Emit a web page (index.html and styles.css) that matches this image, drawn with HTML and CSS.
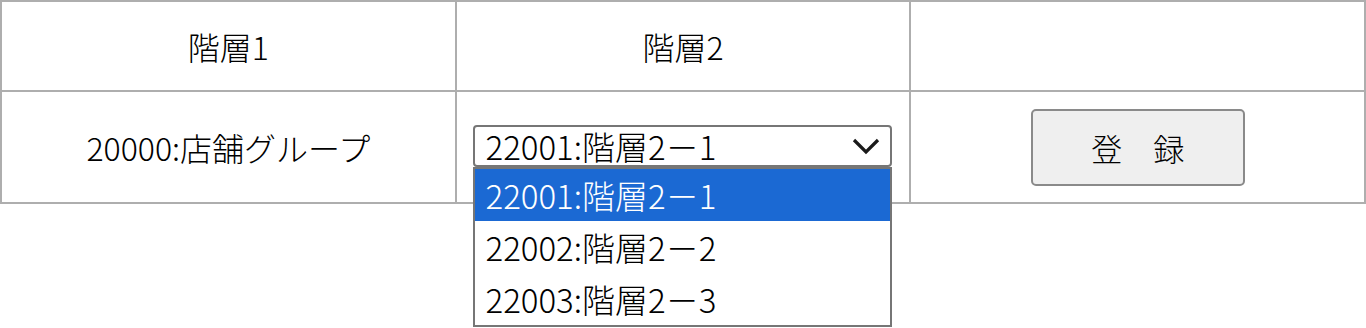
FILE: index.html
```html
<!DOCTYPE html>
<html lang="ja">
<head>
<meta charset="utf-8">
<link rel="stylesheet" href="styles.css">
</head>
<body>
<table class="grid">
  <tr class="head-row">
    <td>階層1</td>
    <td>階層2</td>
    <td></td>
  </tr>
  <tr class="body-row">
    <td>20000:店舗グループ</td>
    <td>
      <div class="select-wrap">
        <div class="select">
          <span class="select-value">22001:階層2－1</span>
          <svg class="chevron" width="28" height="18" viewBox="0 0 28 18"><polyline points="2,3 14,15 26,3" fill="none" stroke="#1a1a1a" stroke-width="3.2"/></svg>
        </div>
        <ul class="options">
          <li class="option selected">22001:階層2－1</li>
          <li class="option">22002:階層2－2</li>
          <li class="option">22003:階層2－3</li>
        </ul>
      </div>
    </td>
    <td><button class="btn">登　録</button></td>
  </tr>
</table>
</body>
</html>
```
FILE: styles.css
```css
html {
  margin: 0;
  padding: 0;
  min-height: 328px;
  background: #ffffff;
}
body {
  margin: 0;
  padding: 0;
  min-height: 328px;
  font-family: "Noto Sans CJK JP", "Noto Sans", sans-serif;
  color: #000;
}
.grid {
  width: 1366px;
  border-collapse: collapse;
  table-layout: fixed;
}
.grid td {
  border: 2px solid #aeaeae;
  text-align: center;
  vertical-align: middle;
  font-size: 32px;
  font-weight: 300;
  padding: 0;
}
.head-row td {
  height: 88px;
}
.body-row td {
  height: 110px;
}
.select-wrap {
  position: relative;
  width: 419px;
  margin: -3px auto 0;
}
.select {
  box-sizing: border-box;
  height: 42px;
  border: 2px solid #767676;
  border-radius: 4px;
  display: flex;
  align-items: center;
  justify-content: space-between;
  padding: 0 10px 0 10px;
  background: #fff;
}
.select-value {
  font-size: 33px;
  line-height: 38px;
}
.chevron {
  display: block;
}
.options {
  position: absolute;
  left: 0;
  top: 42px;
  width: 419px;
  box-sizing: border-box;
  margin: 0;
  padding: 0;
  list-style: none;
  border: 2px solid #767676;
  background: #fff;
  text-align: left;
  z-index: 2;
}
.option {
  height: 52px;
  line-height: 52px;
  padding-left: 10px;
  font-size: 33px;
}
.option.selected {
  background: #1b69d3;
  color: #fff;
}
.btn {
  width: 214px;
  height: 77px;
  border: 2px solid #8a8a8a;
  border-radius: 5px;
  background: #efefef;
  font-family: "Noto Sans CJK JP", sans-serif;
  font-size: 31px;
  font-weight: 300;
  color: #000;
  padding: 0;
}
```
